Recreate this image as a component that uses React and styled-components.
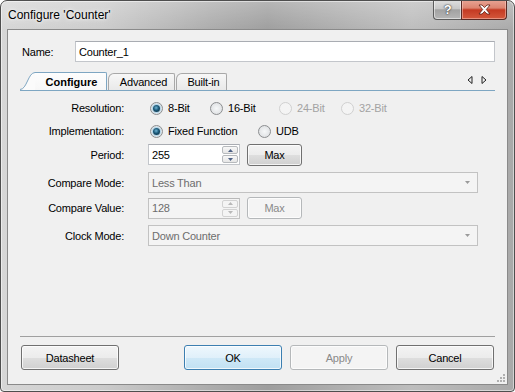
import React from "react";
import styled, { createGlobalStyle } from "styled-components";

const GlobalStyle = createGlobalStyle`
  html, body { margin: 0; padding: 0; background: #fff; }
  body { font-family: "Liberation Sans", Arial, sans-serif; font-size: 11px; letter-spacing: -0.2px; }
  * { box-sizing: border-box; }
`;

const Window = styled.div`
  width: 515px;
  height: 392px;
  border: 1px solid #4e4e4e;
  border-radius: 7px 7px 4px 4px;
  padding: 0 6px 6px;
  display: flex;
  flex-direction: column;
  overflow: hidden;
  background:
    linear-gradient(180deg, rgba(255,255,255,0.25) 0px, rgba(255,255,255,0) 30px),
    linear-gradient(90deg, #d6d6d6 0%, #cbcbcb 20%, #aaaaaa 42%, #9e9e9e 52%, #acacac 64%, #bdbdbd 80%, #a9a9a9 100%);
  box-shadow: inset 0 0 0 1px rgba(255,255,255,0.5);
`;

const TitleBar = styled.div`
  height: 28px;
  flex-shrink: 0;
  display: flex;
  align-items: flex-start;
`;

const Title = styled.div`
  padding: 7px 0 0 1px;
  font-family: "Liberation Sans", Arial, sans-serif;
  font-size: 12px;
  letter-spacing: 0;
  line-height: 14px;
  color: #000;
  text-shadow: 0 0 6px rgba(255,255,255,0.9), 0 0 3px rgba(255,255,255,0.9);
`;

const CaptionButtons = styled.div`
  margin-left: auto;
  margin-right: 1px;
  margin-top: -1px;
  display: flex;
`;

const HelpButton = styled.div`
  width: 28px;
  height: 20px;
  border: 1px solid #5c5c5c;
  border-top: none;
  border-right: none;
  border-radius: 0 0 0 4px;
  background: linear-gradient(180deg, #e0e0e0 0%, #c8c8c8 45%, #a2a2a2 52%, #b6b6b6 100%);
  box-shadow: inset 0 0 0 1px rgba(255,255,255,0.5);
  display: flex;
  align-items: center;
  justify-content: center;
  color: #fff;
  font-weight: bold;
  font-size: 13px;
  text-shadow: 0 0 2px #333, 0 0 1px #333;
`;

const CloseButton = styled.div`
  width: 46px;
  height: 20px;
  border: 1px solid #5a2a24;
  border-top: none;
  border-radius: 0 0 4px 0;
  background: linear-gradient(180deg, #e8a595 0%, #dc8470 42%, #c43a22 52%, #d4583c 100%);
  box-shadow: inset 0 0 0 1px rgba(255,220,210,0.45);
  display: flex;
  align-items: center;
  justify-content: center;
`;

const Client = styled.div`
  flex: 1;
  min-height: 0;
  position: relative;
  border: 1px solid #8a8a8a;
  background: #f0f0f0;
  display: flex;
  flex-direction: column;
  padding: 11px 12px 14px;
`;

const NameRow = styled.div`
  display: flex;
  align-items: center;
  height: 21px;
`;

const NameLabel = styled.div`
  width: 55px;
  padding-left: 2px;
  flex-shrink: 0;
  color: #000;
`;

const TextBox = styled.div`
  flex: ${(p) => (p.$grow ? 1 : "none")};
  width: ${(p) => (p.$w ? `${p.$w}px` : "auto")};
  height: ${(p) => p.$h || 21}px;
  border: 1px solid ${(p) => (p.$disabled ? "#c2c2c2" : "#c3c6cb")};
  border-top-color: ${(p) => (p.$disabled ? "#b8b8b8" : "#a9acb2")};
  background: ${(p) => (p.$disabled ? "#f4f4f4" : "#fff")};
  color: ${(p) => (p.$disabled ? "#6d6d6d" : "#000")};
  display: flex;
  align-items: center;
  padding-left: 3px;
`;

const BoxText = styled.span`
  flex: 1;
`;

const TabStrip = styled.div`
  margin-top: 8px;
  height: 21px;
  flex-shrink: 0;
  display: flex;
  align-items: flex-end;
  border-bottom: 1px solid #7ea6c2;
`;

const SelectedTab = styled.div`
  width: 72px;
  height: 18px;
  border-top: 1px solid #7ea6c2;
  border-right: 1px solid #7ea6c2;
  border-radius: 0 2px 0 0;
  background: linear-gradient(180deg, #fdfdfd 0%, #f7f7f7 100%);
  font-weight: bold;
  font-size: 11px;
  letter-spacing: 0;
  display: flex;
  align-items: center;
  justify-content: center;
  padding-left: 2px;
  color: #000;
`;

const Tab = styled.div`
  width: ${(p) => p.$w}px;
  margin-left: 1px;
  height: 17px;
  border: 1px solid #a8a8a8;
  border-bottom: none;
  border-radius: 6px 2px 0 0;
  background: linear-gradient(180deg, #f7f7f7 0%, #e9e9e9 100%);
  display: flex;
  align-items: center;
  justify-content: center;
  padding-left: 4px;
  color: #000;
`;

const TabArrows = styled.div`
  margin-left: auto;
  margin-right: 8px;
  align-self: center;
  display: flex;
`;

const Row = styled.div`
  display: flex;
  align-items: center;
  height: ${(p) => p.$h}px;
  margin-top: ${(p) => p.$mt}px;
  flex-shrink: 0;
`;

const FieldLabel = styled.div`
  width: 104px;
  margin-right: 24px;
  text-align: right;
  flex-shrink: 0;
  color: #000;
`;

const RadioOption = styled.div`
  width: ${(p) => p.$w}px;
  display: flex;
  align-items: center;
  gap: 5px;
  padding-left: 2px;
  color: ${(p) => (p.$disabled ? "#a3a3a3" : "#000")};
  flex-shrink: 0;
`;

const RadioCircle = styled.span`
  width: 13px;
  height: 13px;
  border-radius: 50%;
  border: 1px solid ${(p) => (p.$disabled ? "#d0d0d0" : "#8c8e90")};
  background: ${(p) =>
    p.$disabled
      ? "#f4f4f4"
      : "radial-gradient(circle at 50% 50%, #f6f8f9 0%, #e3e5e7 65%, #cfd3d6 100%)"};
  display: flex;
  align-items: center;
  justify-content: center;
  flex-shrink: 0;
  &::after {
    content: "";
    display: ${(p) => (p.$checked ? "block" : "none")};
    width: 7px;
    height: 7px;
    border-radius: 50%;
    background: radial-gradient(circle at 45% 40%, #6fb4d4 0%, #1a5878 45%, #0a2535 100%);
    box-shadow: 0 0 1px 1px #a9d3ea;
  }
`;

const Spinner = styled.div`
  width: 16px;
  align-self: stretch;
  margin: 1px;
  display: flex;
  flex-direction: column;
  gap: 1px;
`;

const SpinButton = styled.div`
  flex: 1;
  border: 1px solid ${(p) => (p.$disabled ? "#d2d2d2" : "#b7babd")};
  border-radius: 2px;
  background: ${(p) =>
    p.$disabled ? "#f4f4f4" : "linear-gradient(180deg, #f8f8f8 0%, #e6e6e6 100%)"};
  display: flex;
  align-items: center;
  justify-content: center;
`;

const Combo = styled.div`
  width: 330px;
  height: 21px;
  border: 1px solid #c2c2c2;
  background: #f4f4f4;
  color: #6d6d6d;
  display: flex;
  align-items: center;
  padding: 0 7px 0 3px;
`;

const Button = styled.div`
  width: ${(p) => p.$w || 98}px;
  height: ${(p) => p.$h || 25}px;
  margin-left: ${(p) => p.$ml || 0}px;
  border-radius: 3px;
  border: 1px solid
    ${(p) => (p.$default ? "#3c7fb1" : p.$disabled ? "#b5b8ba" : "#707070")};
  background: ${(p) =>
    p.$default
      ? "linear-gradient(180deg, #eef7fd 0%, #e0f0fa 50%, #cfe8f7 51%, #c1e1f3 100%)"
      : p.$disabled
      ? "#f4f4f4"
      : "linear-gradient(180deg, #f3f3f3 0%, #ececec 50%, #dedede 51%, #d0d0d0 100%)"};
  box-shadow: inset 0 0 0 1px rgba(255,255,255,0.75);
  color: ${(p) => (p.$disabled ? "#8a8a8a" : "#000")};
  display: flex;
  align-items: center;
  justify-content: center;
  flex-shrink: 0;
`;

const Spacer = styled.div`
  flex: 1;
`;

const Separator = styled.div`
  height: 1px;
  background: #a0a0a0;
  flex-shrink: 0;
`;

const ButtonRow = styled.div`
  margin-top: 8px;
  height: 25px;
  display: flex;
  gap: 8px;
  padding: 0 1px;
  flex-shrink: 0;
`;

const SizeGrip = styled.svg`
  position: absolute;
  right: 2px;
  bottom: 2px;
`;

const Radio = ({ w, checked, disabled, children }) => (
  <RadioOption $w={w} $disabled={disabled}>
    <RadioCircle $checked={checked} $disabled={disabled} />
    <span>{children}</span>
  </RadioOption>
);

const Arrow = ({ up, color }) => (
  <svg width="5" height="3" viewBox="0 0 5 3">
    <path d={up ? "M0 3 L2.5 0 L5 3 Z" : "M0 0 L2.5 3 L5 0 Z"} fill={color} />
  </svg>
);

const NumberBox = ({ value, disabled }) => (
  <TextBox $w={92} $disabled={disabled} style={{ paddingRight: 0 }}>
    <BoxText>{value}</BoxText>
    <Spinner>
      <SpinButton $disabled={disabled}>
        <Arrow up color={disabled ? "#b8b8b8" : "#4d6185"} />
      </SpinButton>
      <SpinButton $disabled={disabled}>
        <Arrow color={disabled ? "#b8b8b8" : "#4d6185"} />
      </SpinButton>
    </Spinner>
  </TextBox>
);

const DisabledCombo = ({ value }) => (
  <Combo>
    <BoxText>{value}</BoxText>
    <svg width="5" height="3" viewBox="0 0 5 3">
      <path d="M0 0 L5 0 L2.5 3 Z" fill="#9a9a9a" />
    </svg>
  </Combo>
);

export default function App() {
  return (
    <>
      <GlobalStyle />
      <Window>
        <TitleBar>
          <Title>Configure 'Counter'</Title>
          <CaptionButtons>
            <HelpButton>?</HelpButton>
            <CloseButton>
              <svg width="13" height="11" viewBox="0 0 13 11">
                <path
                  d="M1 1 L4 1 L6.5 3.6 L9 1 L12 1 L8.3 5.5 L12 10 L9 10 L6.5 7.4 L4 10 L1 10 L4.7 5.5 Z"
                  fill="#fff"
                  stroke="#5b1c12"
                  strokeWidth="0.8"
                  strokeLinejoin="round"
                />
              </svg>
            </CloseButton>
          </CaptionButtons>
        </TitleBar>
        <Client>
          <NameRow>
            <NameLabel>Name:</NameLabel>
            <TextBox $grow>
              <BoxText>Counter_1</BoxText>
            </TextBox>
          </NameRow>

          <TabStrip>
            <svg width="15" height="18" viewBox="0 0 15 18" style={{ display: "block" }}>
              <path d="M0 18 C7 18 8 0.5 15 0.5 L15 18 Z" fill="#fbfbfb" />
              <path d="M0 17.5 C7 17.5 8 0.5 15 0.5" fill="none" stroke="#7ea6c2" strokeWidth="1" />
            </svg>
            <SelectedTab>Configure</SelectedTab>
            <Tab $w={67}>Advanced</Tab>
            <Tab $w={51}>Built-in</Tab>
            <TabArrows>
              <svg width="20" height="8" viewBox="0 0 20 8">
                <path d="M5 0.5 L1 4 L5 7.5 Z" fill="none" stroke="#222" strokeWidth="1" strokeLinejoin="round" />
                <path d="M15 0.5 L19 4 L15 7.5 Z" fill="none" stroke="#222" strokeWidth="1" strokeLinejoin="round" />
              </svg>
            </TabArrows>
          </TabStrip>

          <Row $h={22} $mt={6}>
            <FieldLabel>Resolution:</FieldLabel>
            <Radio w={60} checked>8-Bit</Radio>
            <Radio w={69}>16-Bit</Radio>
            <Radio w={62} disabled>24-Bit</Radio>
            <Radio w={60} disabled>32-Bit</Radio>
          </Row>
          <Row $h={22} $mt={1}>
            <FieldLabel>Implementation:</FieldLabel>
            <Radio w={108} checked>Fixed Function</Radio>
            <Radio w={60}>UDB</Radio>
          </Row>
          <Row $h={23} $mt={1}>
            <FieldLabel>Period:</FieldLabel>
            <NumberBox value="255" />
            <Button $w={55} $h={22} $ml={7}>Max</Button>
          </Row>
          <Row $h={21} $mt={6}>
            <FieldLabel>Compare Mode:</FieldLabel>
            <DisabledCombo value="Less Than" />
          </Row>
          <Row $h={22} $mt={4}>
            <FieldLabel>Compare Value:</FieldLabel>
            <NumberBox value="128" disabled />
            <Button $w={55} $h={22} $ml={7} $disabled>Max</Button>
          </Row>
          <Row $h={21} $mt={6}>
            <FieldLabel>Clock Mode:</FieldLabel>
            <DisabledCombo value="Down Counter" />
          </Row>

          <Spacer />
          <Separator />
          <ButtonRow>
            <Button>Datasheet</Button>
            <Spacer />
            <Button $default>OK</Button>
            <Button $disabled>Apply</Button>
            <Button>Cancel</Button>
          </ButtonRow>
          <SizeGrip width="8" height="8" viewBox="0 0 8 8">
            {[[6, 0], [6, 3], [3, 3], [6, 6], [3, 6], [0, 6]].map(([x, y]) => (
              <rect key={`${x}-${y}`} x={x} y={y} width="2" height="2" fill="#b0b0b0" />
            ))}
          </SizeGrip>
        </Client>
      </Window>
    </>
  );
}
